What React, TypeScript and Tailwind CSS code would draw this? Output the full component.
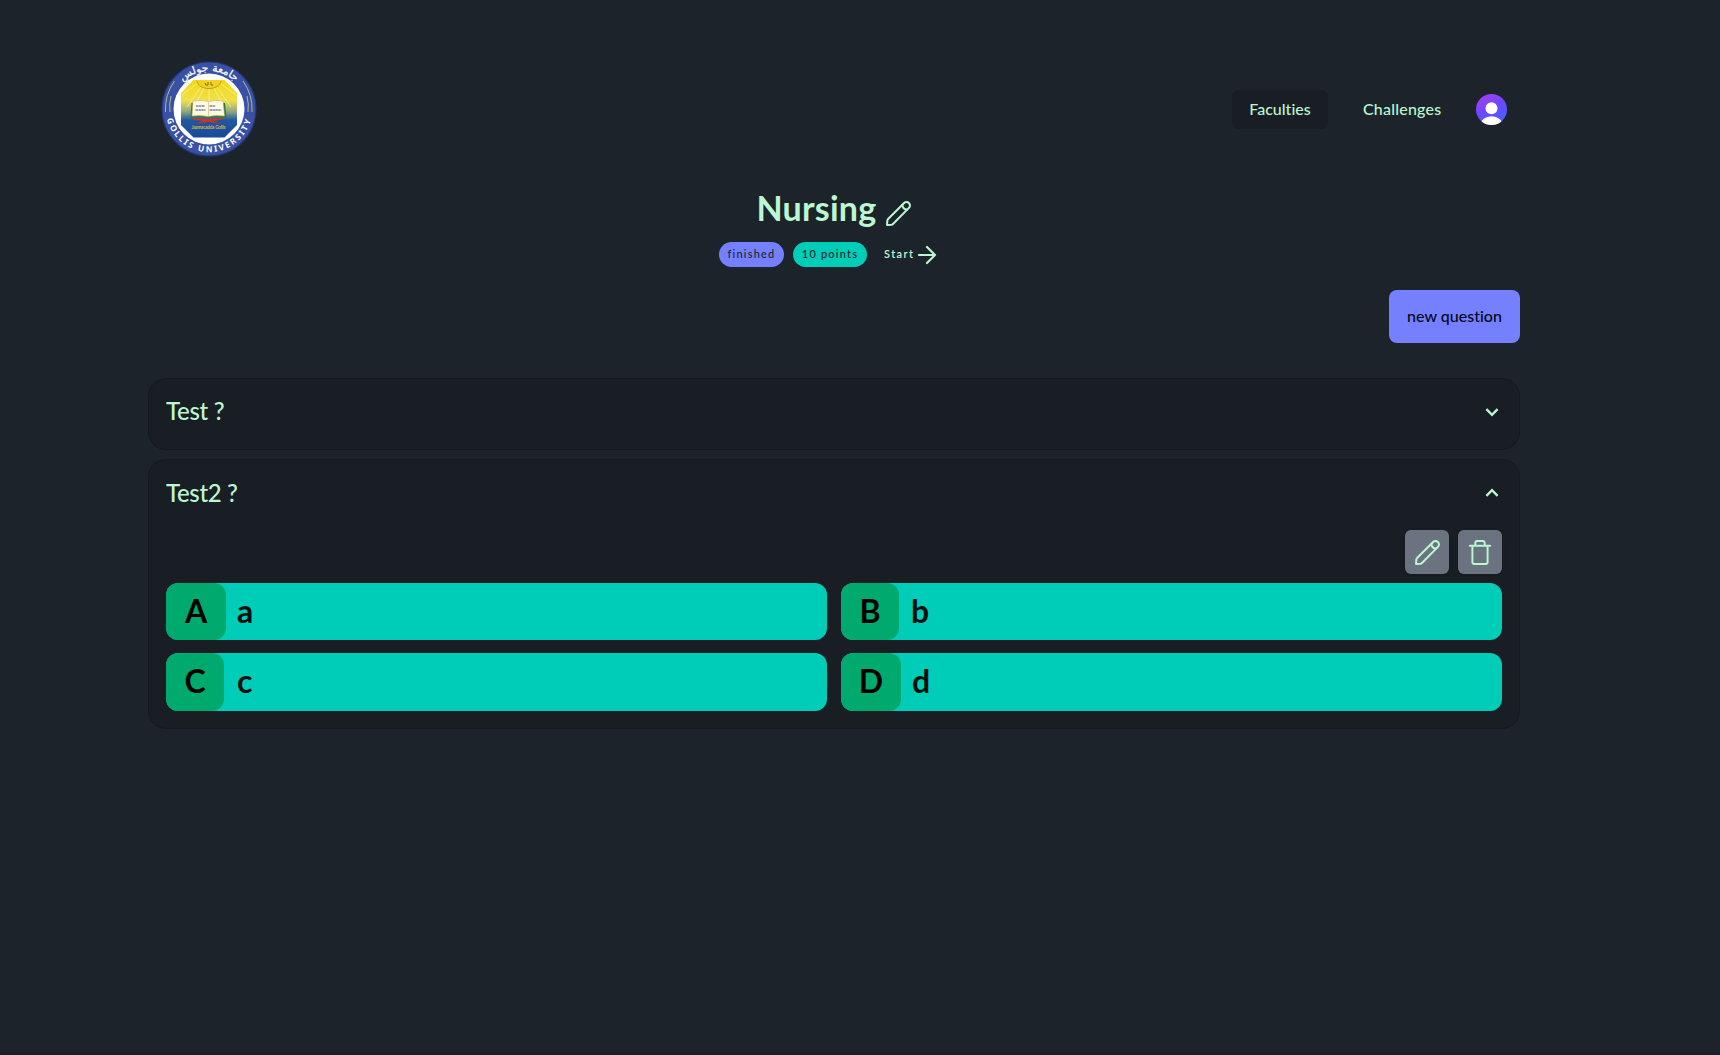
import React from "react";

function Pencil({ className = "" }: { className?: string }) {
  return (
    <svg viewBox="0 0 24 24" fill="none" stroke="currentColor" strokeWidth="1.95" strokeLinecap="round" strokeLinejoin="round" className={className}>
      <path d="M1 23 1.300 18.600Q1.400 17.900 2 17.300L17.400 2a3.200 3.200 0 0 1 4.600 0 3.200 3.200 0 0 1 0 4.600L6.700 22Q6.100 22.600 5.400 22.700Z" />
      <path d="M15.800 3.600c0 2.800 1.800 4.600 4.600 4.600" />
    </svg>
  );
}

function Trash({ className = "" }: { className?: string }) {
  return (
    <svg viewBox="0 0 24 26" fill="none" stroke="currentColor" strokeWidth="1.95" strokeLinecap="round" strokeLinejoin="round" className={className}>
      <path d="M1.800 6.700h20.400M4.400 6.700v16.200a2 2 0 0 0 2 2h11.200a2 2 0 0 0 2-2V6.700M7.300 6.200V3.900a2 2 0 0 1 2-2h5.400a2 2 0 0 1 2 2v2.300" />
    </svg>
  );
}

function Chevron({ up = false }: { up?: boolean }) {
  return (
    <svg viewBox="0 0 14 10" className="h-[10px] w-[14px] shrink-0" fill="none" stroke="currentColor" strokeWidth="2.4">
      <path d={up ? "M1.400 7.800 7 2.200l5.600 5.600" : "M1.400 2.200 7 7.800l5.600-5.600"} />
    </svg>
  );
}

function Logo() {
  return (
    <svg viewBox="0 0 120 120" className="h-[120px] w-[120px]">
      <defs>
        <linearGradient id="sky" x1="0" y1="0" x2="0" y2="1">
          <stop offset="0" stopColor="#f4d90c" />
          <stop offset=".36" stopColor="#eee04a" />
          <stop offset=".55" stopColor="#8da588" />
          <stop offset=".7" stopColor="#22569d" />
          <stop offset="1" stopColor="#174b9b" />
        </linearGradient>
        <path id="bottomArc" d="M17.900 70A43.300 43.300 0 0 0 102.100 70" />
        <path id="topArc" d="M32 34.500A38 38 0 0 1 88 34.500" />
      </defs>
      <circle cx="60" cy="60" r="47" fill="#3850a6" stroke="#26376f" strokeWidth="1.200" />
      <circle cx="60" cy="60" r="35.500" fill="#fff" />
      <path d="M44.500 31h31L88 44v32L75.500 88.500h-31L32 76V44Z" fill="url(#sky)" />
      <g stroke="#f8f0a6" strokeWidth=".8" fill="none">
        <path d="M52 38 38 58M55 39 47 55M60 40v13M65 39l8 16M68 38l14 20M49 34 33 46M71 34l16 12" />
      </g>
      <path d="M48 32c1 10 23 10 24 0" fill="#f2cf22" stroke="#a7912b" strokeWidth=".8" />
      <path d="M56 34q0 3 3 2v-3m3 0v3h2" fill="none" stroke="#66712b" strokeWidth=".9" />
      <path d="m42.500 54-1 14.500h36l-1.500-14.500Z" fill="#2d7641" />
      <path d="M44 52q8-1.500 15.500.5 7.500-2 14.500-.5l1.500 15q-8.500-1-16.500.5-8-1.500-16-.5Z" fill="#fffbe0" stroke="#d5ad55" strokeWidth=".6" />
      <path d="M59.500 53v14" stroke="#d8bc8a" strokeWidth=".7" />
      <path d="M47 57h9M46.500 61h10M60.500 57h6M60.500 61h12" stroke="#7c84b0" strokeWidth="1.400" strokeDasharray="2.500 .4" />
      <path d="m42 69 17 1 17-1-4 2-8 1 8 3-13-2-12 2 7-3-8-1Z" fill="#c93527" />
      <text x="59.500" y="79.500" textAnchor="middle" fontFamily="Lato" fontWeight="700" fontSize="4.600" fill="#d2b744" textLength="34">Jaamacadda Gollis</text>
      <g fill="none" stroke="#aebc83" strokeWidth="1">
        <path d="M25.500 32q-10 14-9 31M22 47q-2 8-1 16M94 32q10 14 9 31M98 47q2 8 1 16" />
      </g>
      <g fill="#fff">
        <text fontFamily="Noto Sans, sans-serif" fontWeight="700" fontSize="8.300"><textPath href="#bottomArc" textLength="114">GOLLIS UNIVERSITY</textPath></text>
        <text fontSize="10.500" fontWeight="400" fontFamily="DejaVu Sans, sans-serif" textAnchor="middle" direction="rtl" stroke="#fff" strokeWidth=".25"><textPath href="#topArc" startOffset="50%">جامعة جولس</textPath></text>
      </g>
    </svg>
  );
}

function Avatar() {
  return (
    <svg viewBox="0 0 31 31" className="ml-[34px] h-[31px] w-[31px]">
      <defs>
        <linearGradient id="av" x1=".1" y1="0" x2=".7" y2="1">
          <stop offset=".1" stopColor="#a53df8" />
          <stop offset=".5" stopColor="#6c47ff" />
          <stop offset="1" stopColor="#4763ff" />
        </linearGradient>
        <clipPath id="round"><circle cx="15.500" cy="15.500" r="15.500" /></clipPath>
      </defs>
      <g clipPath="url(#round)">
        <path fill="url(#av)" d="M0 0h31v31H0z" />
        <circle cx="15.500" cy="14.300" r="6" fill="#fff" />
        <ellipse cx="15.500" cy="32" rx="11.500" ry="9.800" fill="#fff" />
      </g>
    </svg>
  );
}

function Answer({ letter, text, box, gap }: { letter: string; text: string; box: string; gap: string }) {
  return (
    <div className="flex overflow-hidden rounded-xl bg-[#00cdb8] text-[32px] font-bold text-[#000f0c]">
      <span className={`flex items-center justify-center rounded-xl bg-[#00a96e] pb-[2px] text-black ${box}`}>{letter}</span>
      <span className={`flex items-center pb-[2px] ${gap}`}>{text}</span>
    </div>
  );
}

export default function App() {
  return (
    <main className="h-[1055px] overflow-hidden border-b-2 border-[#1c1d27] bg-[#1d232a] pl-[148px] pt-[49px] font-['Lato',sans-serif] text-[#bbf7d0] [font-variant-ligatures:none]">
      <div className="w-[1372px]">
        <header className="flex h-[120px] items-center justify-between pl-[1px] pr-[13px]">
          <Logo />
          <nav className="flex items-center text-base font-medium">
            <a className="flex h-[39px] w-24 items-center justify-center rounded-md bg-[#191e24] pb-px">Faculties</a>
            <a className="ml-[35px] w-[79px] whitespace-nowrap pb-px tracking-[.200px]">Challenges</a>
            <Avatar />
          </nav>
        </header>

        <section className="flex h-[98px] flex-col items-center pt-[19px]">
          <div className="flex h-10 items-center pr-[1px]">
            <h1 className="w-[129px] whitespace-nowrap text-[34px] font-bold leading-[38px] tracking-[.200px]">Nursing</h1>
            <Pencil className="mt-[11px] h-[25px] w-[25px]" />
          </div>
          <div className="mt-[14px] flex h-[25px] items-center pr-[12px] text-[11px] font-medium tracking-[1.200px]">
            <span className="flex h-[25px] w-[65px] items-center justify-center rounded-full bg-[#7480ff] pb-px text-[#1d232a]">finished</span>
            <span className="ml-[9px] flex h-[25px] w-[74px] items-center justify-center whitespace-nowrap rounded-full bg-[#00cdb8] pb-px text-[#1d232a]">10 points</span>
            <span className="ml-[17px] w-[33px] pb-px font-semibold tracking-[1.400px]">Start</span>
            <svg viewBox="0 0 20 20" className="h-5 w-5" fill="none" stroke="currentColor" strokeWidth="2.200" strokeLinecap="round" strokeLinejoin="round">
              <path d="M2 10h16M10 2l8 8-8 8" />
            </svg>
          </div>
        </section>

        <div className="mt-[23px] flex justify-end">
          <button className="h-[53px] w-[131px] rounded-lg bg-[#7480ff] pb-0.5 text-base font-medium text-[#050617]">new question</button>
        </div>

        <section className="mt-[35px] flex flex-col gap-[9px]">
          <article className="flex h-[72px] justify-between rounded-[18px] border border-[#15191e] bg-[#191e24] pl-[17px] pr-[20px] pt-[14px]">
            <h2 className="text-[24px] font-medium leading-[35px] tracking-[-.300px]">Test ?</h2>
            <div className="pt-[14px]"><Chevron /></div>
          </article>
          <article className="h-[270px] rounded-[18px] border border-[#15191e] bg-[#191e24] px-[17px] pt-[15px]">
            <div className="flex h-[55px] justify-between pr-[3px]">
              <h2 className="text-[24px] font-medium leading-[35px] tracking-[-.350px]">Test2 ?</h2>
              <div className="pt-[13px]"><Chevron up /></div>
            </div>
            <div className="flex justify-end gap-[9px]">
              <button className="flex h-11 w-11 items-center justify-center rounded-md bg-[#6b7280] shadow"><Pencil className="h-[25px] w-[25px]" /></button>
              <button className="flex h-11 w-11 items-center justify-center rounded-md bg-[#6b7280] shadow"><Trash className="h-[26px] w-6" /></button>
            </div>
            <div className="mt-[9px] grid grid-cols-2 grid-rows-[57px_58px] gap-x-[14px] gap-y-[13px]">
              <Answer letter="A" text="a" box="w-[60px]" gap="pl-[11px]" />
              <Answer letter="B" text="b" box="w-[58px]" gap="pl-[12px]" />
              <Answer letter="C" text="c" box="w-[58px]" gap="pl-[13px]" />
              <Answer letter="D" text="d" box="w-[60px]" gap="pl-[11px]" />
            </div>
          </article>
        </section>
      </div>
    </main>
  );
}
